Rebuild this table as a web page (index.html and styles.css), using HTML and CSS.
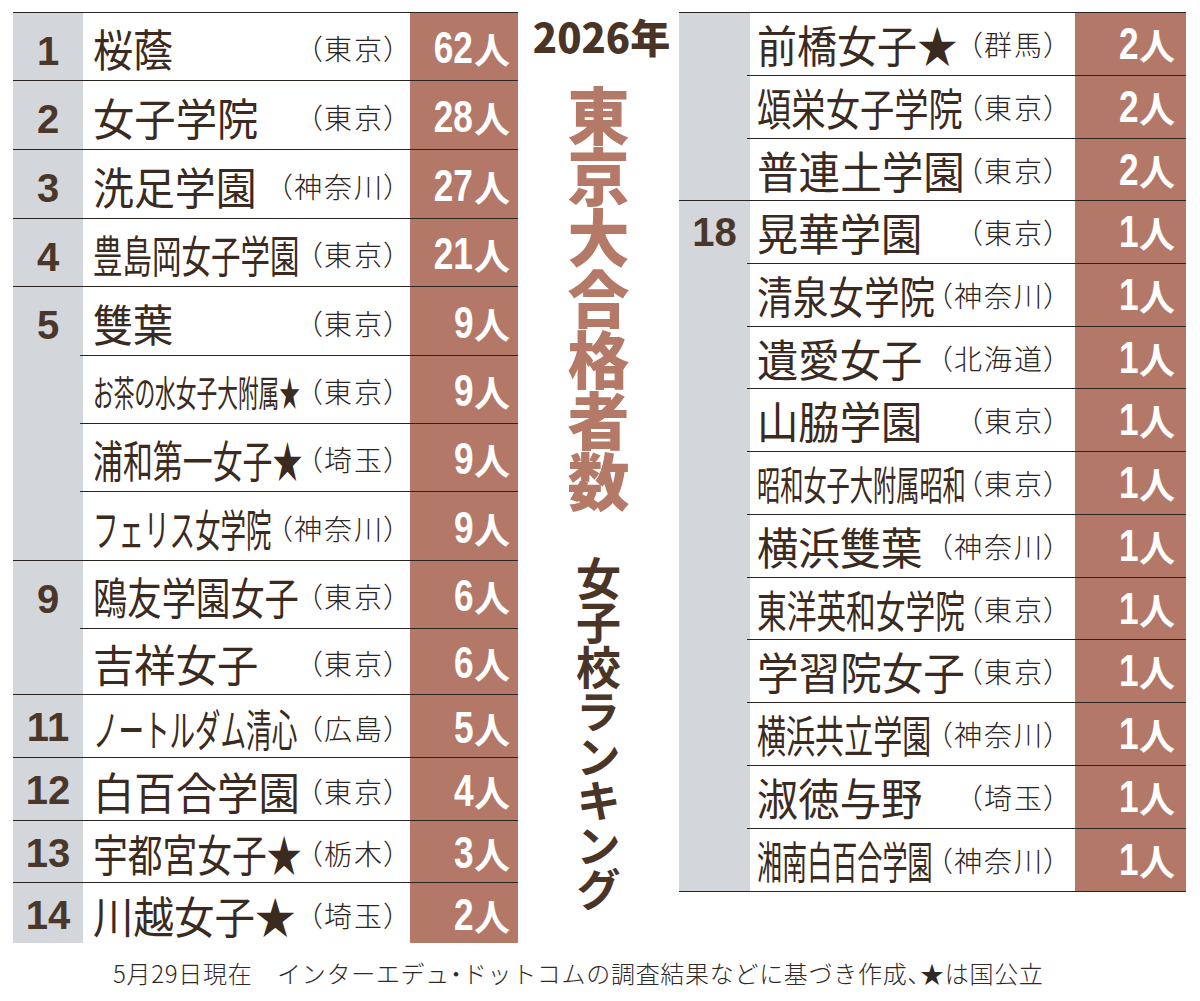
FILE: index.html
```html
<!DOCTYPE html>
<html lang="ja">
<head>
<meta charset="utf-8">
<title>2026年 東京大合格者数 女子校ランキング</title>
<link rel="stylesheet" href="styles.css">
</head>
<body>
<div class="page">
  <div class="tbl tbl-left">
    <div class="rk">1</div>
    <div class="nmc"><span class="nm" style="--sx:.91">桜蔭</span><span class="rg">（東京）</span></div>
    <div class="ct"><span class="d">62</span>人</div>

    <div class="rk">2</div>
    <div class="nmc"><span class="nm" style="--sx:.94">女子学院</span><span class="rg">（東京）</span></div>
    <div class="ct"><span class="d">28</span>人</div>

    <div class="rk">3</div>
    <div class="nmc"><span class="nm" style="--sx:.93">洗足学園</span><span class="rg">（神奈川）</span></div>
    <div class="ct"><span class="d">27</span>人</div>

    <div class="rk">4</div>
    <div class="nmc"><span class="nm" style="--sx:.67">豊島岡女子学園</span><span class="rg">（東京）</span></div>
    <div class="ct"><span class="d">21</span>人</div>

    <div class="rk sp4">5</div>
    <div class="nmc"><span class="nm" style="--sx:.91">雙葉</span><span class="rg">（東京）</span></div>
    <div class="ct"><span class="d">9</span>人</div>
    <div class="nmc sub"><span class="nm sm" style="--sx:.575">お茶の水女子大附属★</span><span class="rg">（東京）</span></div>
    <div class="ct"><span class="d">9</span>人</div>
    <div class="nmc sub"><span class="nm" style="--sx:.68">浦和第一女子★</span><span class="rg">（埼玉）</span></div>
    <div class="ct"><span class="d">9</span>人</div>
    <div class="nmc sub"><span class="nm" style="--sx:.58">フェリス女学院</span><span class="rg">（神奈川）</span></div>
    <div class="ct"><span class="d">9</span>人</div>

    <div class="rk sp2">9</div>
    <div class="nmc"><span class="nm" style="--sx:.78">鴎友学園女子</span><span class="rg">（東京）</span></div>
    <div class="ct"><span class="d">6</span>人</div>
    <div class="nmc sub"><span class="nm" style="--sx:.94">吉祥女子</span><span class="rg">（東京）</span></div>
    <div class="ct"><span class="d">6</span>人</div>

    <div class="rk low">11</div>
    <div class="nmc"><span class="nm" style="--sx:.58">ノートルダム清心</span><span class="rg">（広島）</span></div>
    <div class="ct"><span class="d">5</span>人</div>

    <div class="rk low">12</div>
    <div class="nmc"><span class="nm" style="--sx:.94">白百合学園</span><span class="rg">（東京）</span></div>
    <div class="ct"><span class="d">4</span>人</div>

    <div class="rk low">13</div>
    <div class="nmc"><span class="nm" style="--sx:.79">宇都宮女子★</span><span class="rg">（栃木）</span></div>
    <div class="ct"><span class="d">3</span>人</div>

    <div class="rk low">14</div>
    <div class="nmc"><span class="nm" style="--sx:.92">川越女子★</span><span class="rg">（埼玉）</span></div>
    <div class="ct"><span class="d">2</span>人</div>
  </div>

  <div class="title">
    <div class="yr">2026年</div>
    <div class="t1">東京大合格者数</div>
    <div class="t2">女子校ランキング</div>
  </div>

  <div class="tbl tbl-right">
    <div class="rk sp3"></div>
    <div class="nmc"><span class="nm" style="--sx:.91">前橋女子★</span><span class="rg">（群馬）</span></div>
    <div class="ct"><span class="d">2</span>人</div>
    <div class="nmc sub"><span class="nm" style="--sx:.78">頌栄女子学院</span><span class="rg">（東京）</span></div>
    <div class="ct"><span class="d">2</span>人</div>
    <div class="nmc sub"><span class="nm" style="--sx:.945">普連土学園</span><span class="rg">（東京）</span></div>
    <div class="ct"><span class="d">2</span>人</div>

    <div class="rk sp11">18</div>
    <div class="nmc"><span class="nm" style="--sx:.94">晃華学園</span><span class="rg">（東京）</span></div>
    <div class="ct"><span class="d">1</span>人</div>
    <div class="nmc sub"><span class="nm" style="--sx:.81">清泉女学院</span><span class="rg">（神奈川）</span></div>
    <div class="ct"><span class="d">1</span>人</div>
    <div class="nmc sub"><span class="nm" style="--sx:.94">遺愛女子</span><span class="rg">（北海道）</span></div>
    <div class="ct"><span class="d">1</span>人</div>
    <div class="nmc sub"><span class="nm" style="--sx:.94">山脇学園</span><span class="rg">（東京）</span></div>
    <div class="ct"><span class="d">1</span>人</div>
    <div class="nmc sub"><span class="nm md" style="--sx:.58">昭和女子大附属昭和</span><span class="rg">（東京）</span></div>
    <div class="ct"><span class="d">1</span>人</div>
    <div class="nmc sub"><span class="nm" style="--sx:.94">横浜雙葉</span><span class="rg">（神奈川）</span></div>
    <div class="ct"><span class="d">1</span>人</div>
    <div class="nmc sub"><span class="nm" style="--sx:.675">東洋英和女学院</span><span class="rg">（東京）</span></div>
    <div class="ct"><span class="d">1</span>人</div>
    <div class="nmc sub"><span class="nm" style="--sx:.945">学習院女子</span><span class="rg">（東京）</span></div>
    <div class="ct"><span class="d">1</span>人</div>
    <div class="nmc sub"><span class="nm" style="--sx:.66">横浜共立学園</span><span class="rg">（神奈川）</span></div>
    <div class="ct"><span class="d">1</span>人</div>
    <div class="nmc sub"><span class="nm" style="--sx:.94">淑徳与野</span><span class="rg">（埼玉）</span></div>
    <div class="ct"><span class="d">1</span>人</div>
    <div class="nmc sub"><span class="nm" style="--sx:.57">湘南白百合学園</span><span class="rg">（神奈川）</span></div>
    <div class="ct"><span class="d">1</span>人</div>
  </div>
</div>
<p class="note">5月29日現在　インターエデュ<span class="pt">・</span>ドットコムの調査結果などに基づき作成<span class="pt">、</span>★は国公立</p>
</body>
</html>
```

FILE: styles.css
```css
html, body {
  margin: 0;
  padding: 0;
  background: #fff;
}
body {
  width: 1200px;
  height: 1001px;
  overflow: hidden;
  font-family: "Noto Sans CJK JP", "Noto Sans", sans-serif;
  color: #3b2a20;
}
.page {
  display: flex;
  align-items: flex-start;
  padding: 12px 0 0 13px;
}
.tbl {
  display: grid;
}
.tbl-left {
  width: 505px;
  grid-template-columns: 70px 327px 108px;
  grid-template-rows: 68px 69px 69px 68px 69px 68px 68px 69px 68px 66px 63px 63px 62px 61px;
}
.tbl-right {
  width: 507px;
  grid-template-columns: 71px 325px 111px;
  grid-template-rows: 63px 63px 62px 63px 63px 62px 63px 63px 63px 62px 63px 63px 63px 63px;
  border-bottom: 1px solid #2b2522;
}
.rk, .nmc, .ct {
  box-sizing: border-box;
  border-top: 1px solid #2b2522;
}
.rk {
  grid-column: 1;
  background: #d3d6db;
  font-family: "Liberation Sans", Arial, sans-serif;
  font-weight: 700;
  font-size: 40px;
  line-height: 40px;
  color: #4a3729;
  text-align: center;
  padding-top: 18px;
}
.rk.low { padding-top: 12px; }
.tbl-right .rk { padding-top: 11px; }
.sp2 { grid-row: span 2; }
.sp3 { grid-row: span 3; }
.sp4 { grid-row: span 4; }
.sp11 { grid-row: span 11; }
.nmc {
  grid-column: 2;
  display: flex;
  align-items: center;
  padding: 3px 12px 0 10px;
  min-width: 0;
}
.nmc.sub {
  margin-left: -3px;
  padding-left: 13px;
}
.tbl-right .nmc { padding: 0 17px 0 7px; }
.tbl-right .nmc.sub { padding-left: 10px; }
.nm {
  display: block;
  flex: 1 1 0;
  min-width: 0;
  white-space: nowrap;
  font-size: 44px;
  line-height: 1;
  font-weight: 400;
  color: #3b2a20;
  transform: scaleX(var(--sx));
  transform-origin: left center;
}
.nm.sm { font-size: 36px; }
.nm.md { font-size: 40px; }
.rg {
  flex: none;
  font-size: 28px;
  font-weight: 300;
  letter-spacing: 2px;
  margin-right: -2px;
  font-feature-settings: "palt";
  white-space: nowrap;
  color: #2e2420;
}
.ct {
  grid-column: 3;
  background: #b37868;
  color: #fff;
  display: flex;
  align-items: center;
  justify-content: flex-end;
  padding: 3px 8px 0 0;
  font-size: 36px;
  font-weight: 700;
  line-height: 1;
}
.tbl-right .ct { padding: 0 11px 0 0; }
.d {
  display: inline-block;
  font-family: "Liberation Sans", Arial, sans-serif;
  font-weight: 700;
  font-size: 44px;
  transform: scaleX(.8);
  transform-origin: right center;
  margin-right: 1px;
}
.title {
  width: 161px;
  display: flex;
  flex-direction: column;
  align-items: center;
}
.yr {
  margin: 4px 0 0 6px;
  font-size: 40px;
  line-height: 1;
  font-weight: 900;
  color: #4a3426;
  letter-spacing: 0;
}
.t1 {
  margin-top: 29px;
  writing-mode: vertical-rl;
  text-orientation: upright;
  font-size: 62px;
  line-height: 1;
  letter-spacing: -1px;
  font-weight: 900;
  color: #b57968;
}
.t2 {
  margin-top: 44px;
  writing-mode: vertical-rl;
  text-orientation: upright;
  font-size: 45px;
  line-height: 1;
  letter-spacing: -0.5px;
  font-weight: 700;
  color: #4b3526;
}
.note {
  margin: 15px 0 0 113px;
  font-size: 24px;
  line-height: 30px;
  font-weight: 300;
  letter-spacing: 0.7px;
  color: #2f2a27;
  white-space: nowrap;
}
.note .pt {
  font-feature-settings: "palt";
}
```
